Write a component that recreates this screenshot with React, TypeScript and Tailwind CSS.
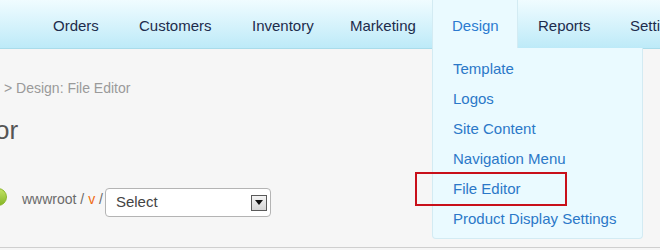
const NAV_ITEMS = [
  { label: "Orders", width: "w-[86px]" },
  { label: "Customers", width: "w-[113px]" },
  { label: "Inventory", width: "w-[98px]" },
  { label: "Marketing", width: "w-[102px]" },
  { label: "Design", width: "w-[86px]" },
  { label: "Reports", width: "w-[92px]" },
  { label: "Settings", width: "w-[92px]" },
];

const DESIGN_MENU = [
  "Template",
  "Logos",
  "Site Content",
  "Navigation Menu",
  "File Editor",
  "Product Display Settings",
];

function TopNav() {
  return (
    <nav className="flex h-[49px] items-stretch border-b border-[#aadcea] bg-gradient-to-b from-[#f0fcff] to-[#bdeaf8] pl-[33px] text-[15px] whitespace-nowrap">
      {NAV_ITEMS.map((item) =>
        item.label === "Design" ? (
          <div
            key={item.label}
            className={`-mb-px flex shrink-0 items-center border-x border-[#d3ebf3] bg-[#eafaff] pl-[19px] pt-[4px] text-[#2b7ad0] ${item.width}`}
          >
            {item.label}
          </div>
        ) : (
          <div
            key={item.label}
            className={`flex shrink-0 items-center pl-5 pt-[4px] text-[#1d2c4c] ${item.width}`}
          >
            {item.label}
          </div>
        )
      )}
    </nav>
  );
}

function DropArrow() {
  return (
    <span className="flex h-[16px] w-[16px] items-center justify-center border border-[#5a5a5a] bg-gradient-to-b from-[#f4f4f4] to-[#d6d6d6]">
      <svg width="8" height="5" viewBox="0 0 8 5">
        <path d="M0 0h8L4 5z" fill="#111" />
      </svg>
    </span>
  );
}

export default function App() {
  return (
    <div
      className="relative h-[250px] w-[660px] overflow-hidden bg-[#f6f6f6] text-[#555]"
      style={{ fontFamily: '"Liberation Sans", Arial, sans-serif' }}
    >
      <TopNav />

      {/* Page content, cropped at the left */}
      <div className="pl-[4px] pt-[29px] text-[14px] leading-[20px] text-[#9a9a9a]">
        &gt; Design: File Editor
      </div>
      <h1 className="ml-[-5px] mt-[17px] text-[26px] leading-[30px] text-[#555]">or</h1>

      <div className="mt-[43px] flex items-start">
        <span className="ml-[-11px] h-[18px] w-[18px] rounded-full border border-[#8cb82c] bg-gradient-to-b from-[#c2e262] to-[#86b625]" />
        <span className="ml-[15px] mt-[1px] text-[14px] leading-[20px] text-[#6a6a6a]">
          wwwroot / <span className="text-[#f06a12]">v</span> /
        </span>
        <div className="ml-[2px] flex h-[29px] w-[166px] items-center justify-between rounded-[4px] border border-[#b4b4b4] bg-white pl-[10px] pr-[3px] text-[15px] text-[#444]">
          <span>Select</span>
          <DropArrow />
        </div>
      </div>

      <div className="mt-[30px] h-px w-full bg-[#cfcfcf]" />

      {/* Open Design dropdown */}
      <div className="absolute left-[432px] top-[48px] h-[191px] w-[211px] rounded-b-[4px] border border-t-0 border-[#d3ebf3] bg-[#eafaff] pt-[6px] pl-[20px] text-[15px] text-[#2b78c8]">
        {DESIGN_MENU.map((item) => (
          <div key={item} className="flex h-[30px] items-center whitespace-nowrap">
            {item}
          </div>
        ))}
      </div>

      {/* Highlight around File Editor */}
      <div className="absolute left-[415px] top-[172px] h-[34px] w-[152px] border-2 border-[#c8101a]" />
    </div>
  );
}
